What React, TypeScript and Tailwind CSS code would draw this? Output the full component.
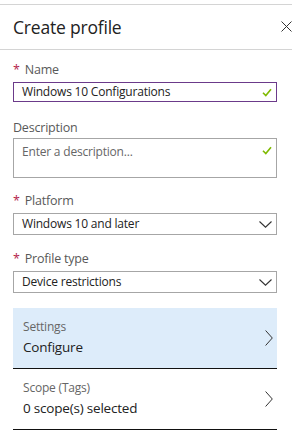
import { ReactNode } from 'react'

const font = { fontFamily: '"Open Sans", "Noto Sans", sans-serif' }

function Check() {
  return (
    <svg width="10" height="9" viewBox="0 0 10 9" className="shrink-0">
      <path d="M1 4.8 L3.8 7.6 L9 1.2" fill="none" stroke="#7fba00" strokeWidth="1.6" />
    </svg>
  )
}

function ChevronDown() {
  return (
    <svg width="13" height="7" viewBox="0 0 13 7" className="shrink-0">
      <path d="M0.5 0.5 L6.5 6.2 L12.5 0.5" fill="none" stroke="#333" strokeWidth="1.1" />
    </svg>
  )
}

function ChevronRight() {
  return (
    <svg width="8" height="16" viewBox="0 0 8 16" className="shrink-0">
      <path d="M0.6 0.5 L7.3 8 L0.6 15.5" fill="none" stroke="#333" strokeWidth="1" />
    </svg>
  )
}

function Label({ children, required }: { children: ReactNode; required?: boolean }) {
  return (
    <div className="flex h-4 items-center text-[12.5px] leading-4 tracking-[-0.2px] text-[#595959]">
      {required && <span className="mr-[5px] text-[#b4234a]">*</span>}
      {children}
    </div>
  )
}

function SelectBox({ value, className }: { value: string; className?: string }) {
  return (
    <div className={`flex h-[22px] items-center justify-between border border-[#a6a6a6] pl-[8px] pr-[4px] text-[12px] tracking-[-0.2px] text-[#222] ${className ?? ''}`}>
      <span>{value}</span>
      <ChevronDown />
    </div>
  )
}

function NavRow({ label, value, active }: { label: string; value: string; active?: boolean }) {
  return (
    <div className={`flex h-[61px] items-center justify-between border-b border-[#111] pl-[10px] pr-[4px] ${active ? 'bg-[#ddecfa]' : 'bg-white'}`}>
      <div className="flex flex-col">
        <span className="text-[12px] leading-4 tracking-[-0.2px] text-[#666]">{label}</span>
        <span className="mt-[2px] text-[13.5px] leading-5 tracking-[-0.2px] text-[#222]">{value}</span>
      </div>
      <ChevronRight />
    </div>
  )
}

export default function App() {
  return (
    <div className="h-[435px] w-[292px] overflow-hidden bg-white pt-[4px]" style={font}>
      <div className="flex h-[46px] items-center justify-between border-y border-[#d4d4d4] pl-[13px]">
        <h1 className="text-[17.5px] tracking-[-0.2px] text-[#222]">Create profile</h1>
        <svg width="11" height="11" viewBox="0 0 11 11" className="-mt-[2px]">
          <path d="M0.5 0.5 L10.5 10.5 M10.5 0.5 L0.5 10.5" stroke="#333" strokeWidth="1" />
        </svg>
      </div>

      <div className="w-[277px] pl-[13px]">
        <div className="mt-[12px]">
          <Label required>Name</Label>
          <div className="mt-[4px] flex h-[20px] items-center justify-between border border-[#6b3a8a] pl-[8px] pr-[4px] text-[12px] tracking-[-0.2px] text-[#222]">
            <span>Windows 10 Configurations</span>
            <Check />
          </div>
        </div>

        <div className="mt-[18px]">
          <Label>Description</Label>
          <div className="mt-[2px] flex h-[40px] justify-between border border-[#a6a6a6] pl-[8px] pr-[4px] pt-[5px] text-[12px] tracking-[-0.2px] text-[#666]">
            <span className="leading-4">Enter a description...</span>
            <div className="mt-[2px]">
              <Check />
            </div>
          </div>
        </div>

        <div className="mt-[15px]">
          <Label required>Platform</Label>
          <SelectBox value="Windows 10 and later" className="mt-[4px]" />
        </div>

        <div className="mt-[16px]">
          <Label required>Profile type</Label>
          <SelectBox value="Device restrictions" className="mt-[4px]" />
        </div>

        <div className="mt-[15px]">
          <NavRow label="Settings" value="Configure" active />
          <NavRow label="Scope (Tags)" value="0 scope(s) selected" />
        </div>
      </div>
    </div>
  )
}
